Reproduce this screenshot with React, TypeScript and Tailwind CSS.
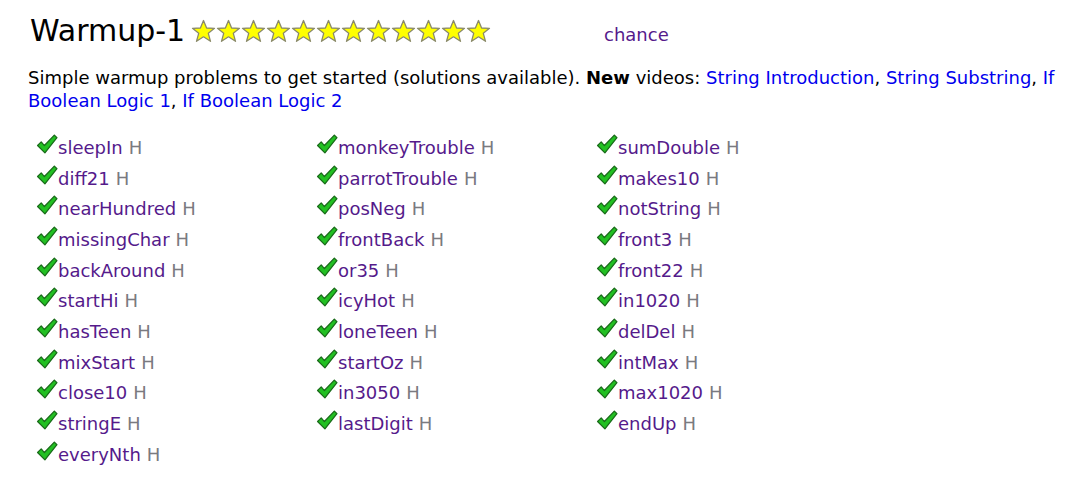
import React from "react";

const columns: string[][] = [
  ["sleepIn", "diff21", "nearHundred", "missingChar", "backAround", "startHi", "hasTeen", "mixStart", "close10", "stringE", "everyNth"],
  ["monkeyTrouble", "parrotTrouble", "posNeg", "frontBack", "or35", "icyHot", "loneTeen", "startOz", "in3050", "lastDigit"],
  ["sumDouble", "makes10", "notString", "front3", "front22", "in1020", "delDel", "intMax", "max1020", "endUp"],
];

function Star() {
  return (
    <svg width="25" height="24" viewBox="0 0 25 24" className="shrink-0">
      <path
        d="M12.5 1.5 L15.6 9 L23.5 9.3 L17.3 14.3 L19.5 22.3 L12.5 17.8 L5.5 22.3 L7.7 14.3 L1.5 9.3 L9.4 9 Z"
        fill="#ffff00"
        stroke="#8a8a6a"
        strokeWidth="1.3"
        strokeLinejoin="round"
      />
    </svg>
  );
}

function Check() {
  return (
    <svg width="22" height="21" viewBox="0 0 21 20" className="shrink-0 -mt-[6px]">
      <path
        d="M1.5 11 L5 7.5 L8 11 L17.5 1 L20 3.5 L8.5 18 Z"
        fill="#22c022"
        stroke="#1a6a1a"
        strokeWidth="1.2"
        strokeLinejoin="round"
      />
    </svg>
  );
}

export default function App() {
  return (
    <div className="min-h-screen bg-white text-black font-['DejaVu_Sans',Verdana,sans-serif] text-[18px]">
      {/* Header */}
      <div className="flex items-center pl-[30px] pt-[14px]">
        <div className="flex items-center w-[574px]">
          <h1 className="text-[30px] leading-[34px] mr-[6px]">Warmup-1</h1>
          <div className="flex">
            {Array.from({ length: 12 }).map((_, i) => (
              <Star key={i} />
            ))}
          </div>
        </div>
        <a className="text-[#551a8b] text-[18px] mt-[6px]">chance</a>
      </div>

      {/* Intro */}
      <p className="pl-[28px] pr-[16px] mt-[18px] leading-[23px]">
        Simple warmup problems to get started (solutions available). <b>New</b> videos:{" "}
        <a className="text-[#0000ee]">String Introduction</a>,{" "}
        <a className="text-[#0000ee]">String Substring</a>,{" "}
        <a className="text-[#0000ee]">If Boolean Logic 1</a>,{" "}
        <a className="text-[#0000ee]">If Boolean Logic 2</a>
      </p>

      {/* Problems */}
      <div className="flex pl-[36px] mt-[20px]">
        {columns.map((col, ci) => (
          <div key={ci} className="w-[280px] flex flex-col">
            {col.map((name) => (
              <div key={name} className="h-[30.7px] flex items-center">
                <Check />
                <a className="text-[#551a8b]">{name}</a>
                <span className="text-[#7a7a80] ml-[6px]">H</span>
              </div>
            ))}
          </div>
        ))}
      </div>
    </div>
  );
}
